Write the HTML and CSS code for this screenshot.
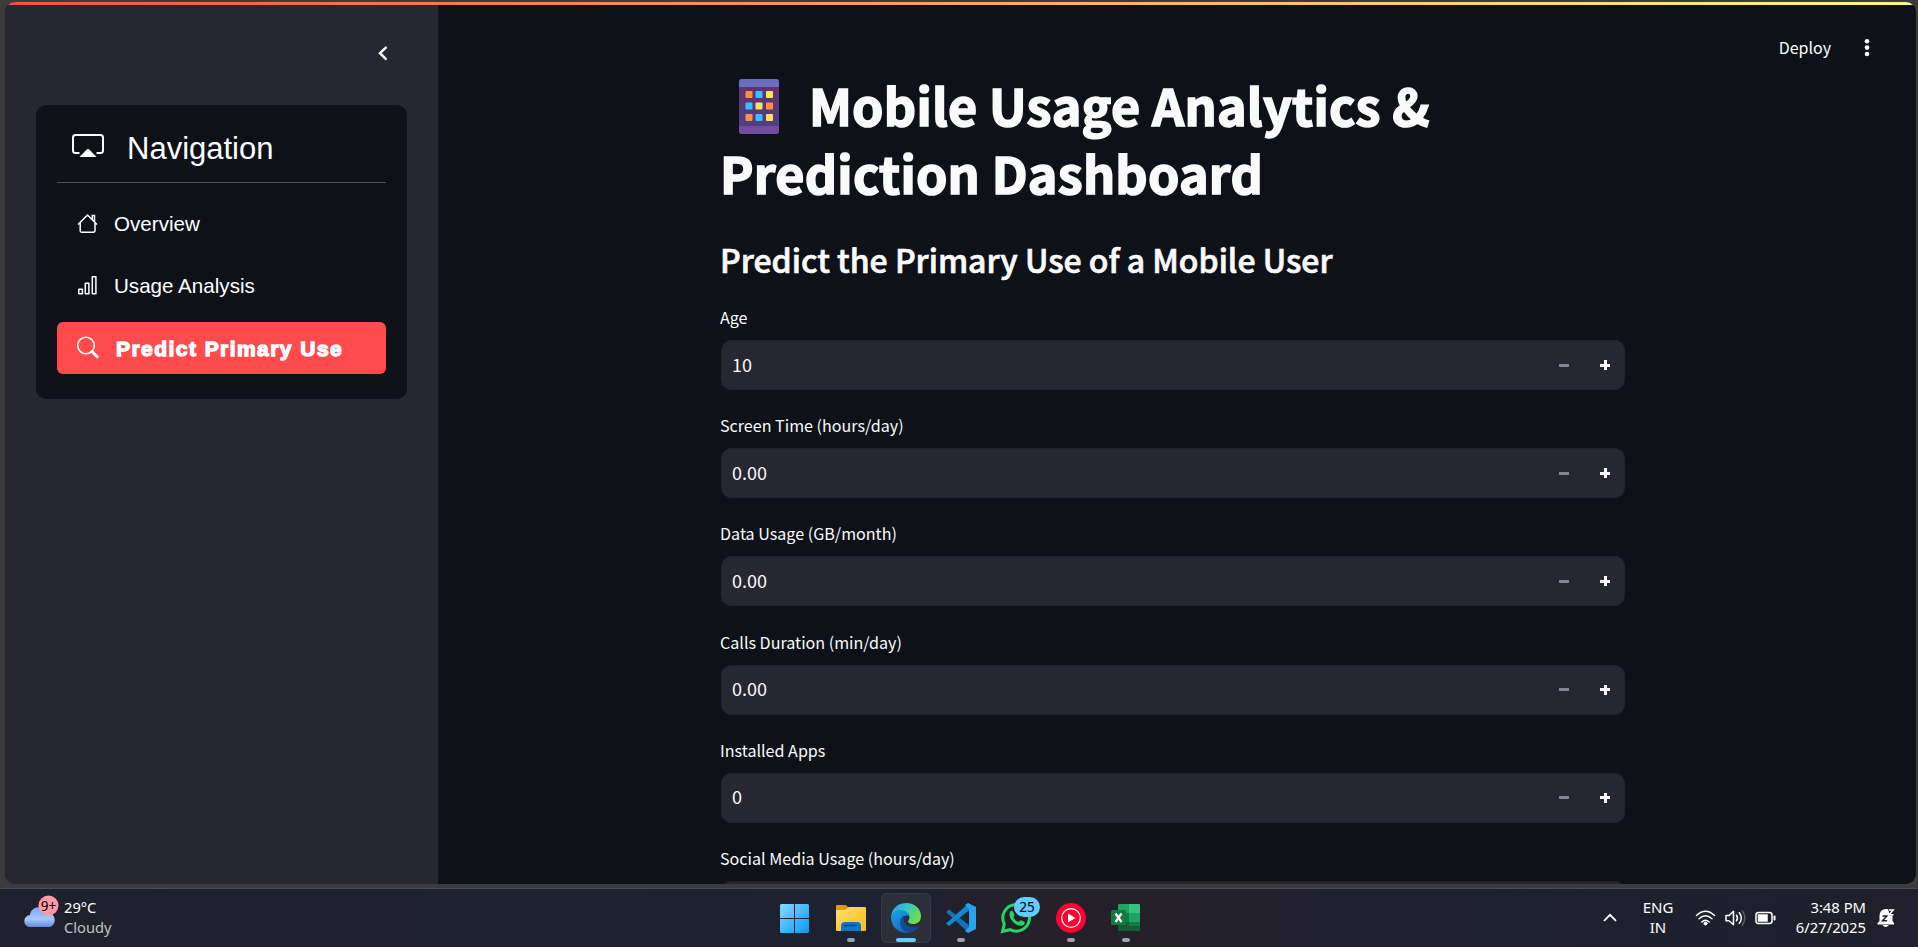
FILE: index.html
```html
<!DOCTYPE html>
<html lang="en">
<head>
<meta charset="utf-8">
<title>Mobile Usage Analytics</title>
<link rel="stylesheet" href="styles.css">
</head>
<body>
<div class="browser">
  <div class="page">
    <div class="rainbow"></div>
    <div class="columns">
      <aside class="sidebar">
        <div class="collapse"><svg width="12" height="17" viewBox="0 0 12 17"><path d="M9.500 1.800 3 8.200l6.500 6.400" fill="none" stroke="#fafafa" stroke-width="2.500"/></svg></div>
        <nav class="menu">
          <div class="menu-head">
            <svg width="32" height="24" viewBox="0 0 32 24"><path d="M7.500 19H3.500Q1 19 1 16.500v-13Q1 1 3.500 1h25Q31 1 31 3.500v13q0 2.500-2.500 2.500h-4" fill="none" stroke="#fff" stroke-width="2"/><path d="M7.500 23 15 15.200q1-1 2 0L24.500 23z" fill="#fff"/></svg>
            <span>Navigation</span>
          </div>
          <div class="item">
            <svg width="22" height="22" viewBox="0 0 22 22"><path d="M1 11.500 10.500 2l9.500 9.500M3.200 9.800v8q0 1.400 1.400 1.400h12q1.400 0 1.400-1.400v-8M15.300 6.500v-4h2.200v6.500" fill="none" stroke="#fff" stroke-width="1.500"/></svg>
            <span>Overview</span>
          </div>
          <div class="item">
            <svg width="22" height="22" viewBox="0 0 22 22"><path d="M1.800 14.200h3.600v4.500H1.800zM8.300 8.200h3.600v10.500H8.300zM15.300 1.700h3.600v17h-3.600z" fill="none" stroke="#fff" stroke-width="1.500" stroke-linejoin="round"/></svg>
            <span>Usage Analysis</span>
          </div>
          <div class="item active">
            <svg width="24" height="24" viewBox="0 0 24 24"><circle cx="10" cy="9.500" r="8.300" fill="none" stroke="#fff" stroke-width="1.500"/><path d="m16 15.500 5.200 5.300" stroke="#fff" stroke-width="3" stroke-linecap="round"/></svg>
            <span>Predict Primary Use</span>
          </div>
        </nav>
      </aside>
      <main class="main">
        <div class="content">
          <h1><svg class="phone" width="40" height="55" viewBox="0 0 40 55">
            <defs><linearGradient id="ph" x2="0" y2="1"><stop stop-color="#632f69"/><stop offset="1" stop-color="#4c4289"/></linearGradient></defs>
            <rect width="40" height="55" rx="3" fill="url(#ph)"/><path d="M0 8V3q0-3 3-3h34q3 0 3 3v5z" fill="#6b6dbd"/><path d="M0 47v5q0 3 3 3h34q3 0 3-3v-5z" fill="#734b9c"/>
            <g fill="#ff9041"><rect x="6.500" y="12" width="7" height="7" rx="1"/><rect x="27" y="23.500" width="7" height="7" rx="1"/><rect x="6.500" y="35" width="7" height="7" rx="1"/></g>
            <g fill="#38bfff"><rect x="16.500" y="12" width="7" height="7" rx="1"/><rect x="6.500" y="23.500" width="7" height="7" rx="1"/><rect x="16.500" y="35" width="7" height="7" rx="1"/></g>
            <g fill="#ffe451"><rect x="27" y="12" width="7" height="7" rx="1"/><rect x="16.500" y="23.500" width="7" height="7" rx="1"/><rect x="27" y="35" width="7" height="7" rx="1"/></g>
          </svg><span>Mobile Usage Analytics &amp;</span><br><span>Prediction Dashboard</span></h1>
          <h2>Predict the Primary Use of a Mobile User</h2>
          <div class="field"><label>Age</label><div class="input"><span>10</span><i class="minus"></i><i class="plus"></i></div></div>
          <div class="field"><label>Screen Time (hours/day)</label><div class="input"><span>0.00</span><i class="minus"></i><i class="plus"></i></div></div>
          <div class="field"><label>Data Usage (GB/month)</label><div class="input"><span>0.00</span><i class="minus"></i><i class="plus"></i></div></div>
          <div class="field"><label>Calls Duration (min/day)</label><div class="input"><span>0.00</span><i class="minus"></i><i class="plus"></i></div></div>
          <div class="field"><label>Installed Apps</label><div class="input"><span>0</span><i class="minus"></i><i class="plus"></i></div></div>
          <div class="field"><label>Social Media Usage (hours/day)</label><div class="input"></div></div>
        </div>
        <div class="toolbar"><span>Deploy</span><svg width="6" height="20" viewBox="0 0 6 20" fill="#fafafa"><circle cx="3" cy="4.200" r="2.300"/><circle cx="3" cy="10.600" r="2.300"/><circle cx="3" cy="17" r="2.300"/></svg></div>
      </main>
    </div>
  </div>
</div>
<footer class="taskbar">
  <div class="weather">
    <svg width="36" height="36" viewBox="0 0 36 36">
      <defs><linearGradient id="cl" x2="0" y2="1"><stop stop-color="#7ea8ee"/><stop offset=".6" stop-color="#a9c8fb"/><stop offset="1" stop-color="#5b8ae0"/></linearGradient></defs>
      <path d="M6.500 32a6 6 0 0 1-.5-12c1-10 15-10 17.500-2 9-1 10 14 1 14z" fill="url(#cl)"/><circle cx="24.500" cy="10.500" r="10" fill="#ff99a4"/><text x="24.500" y="15.500" text-anchor="middle" class="badge-text">9+</text></svg>
    <div class="weather-text"><span>29°C</span><span class="dim">Cloudy</span></div>
  </div>
  <div class="apps">
    <svg width="55" height="58" viewBox="0 0 55 58"><defs><linearGradient id="w" gradientUnits="userSpaceOnUse" x1="12" y1="15" x2="41" y2="44"><stop stop-color="#86dcff"/><stop offset="1" stop-color="#0a95f8"/></linearGradient></defs><path d="M13 15h13v14H12V16zM27 15h13l1 1v13H27zM12 30h14v14H13l-1-1zM27 30h14v13l-1 1H27z" fill="url(#w)"/></svg>
    <svg width="55" height="58" viewBox="0 0 55 58"><defs><linearGradient id="f" x2="1" y2="1"><stop stop-color="#ffde72"/><stop offset="1" stop-color="#fdbb12"/></linearGradient></defs><path d="M13 23v-6q0-1 1-1h8q1 0 2 1l2 2h16v6z" fill="#dc9b05"/><path d="M13 21h9l4-3h16q1 0 1 1v22q0 1-1 1H14q-1 0-1-1z" fill="url(#f)"/><path d="M18 42v-5q0-4 4-4h12q4 0 4 4v5z" fill="#0f75cb"/><path d="M21 36.500h13" stroke="#07457e" stroke-width="1.500"/><rect x="24" y="49" width="8" height="4" rx="2" fill="#a0a0a5"/></svg>
    <svg width="55" height="58" viewBox="0 0 55 58"><defs><linearGradient id="e1" x1="0" x2="1" y2=".5"><stop stop-color="#219be0"/><stop offset=".5" stop-color="#37c6c5"/><stop offset="1" stop-color="#68df4d"/></linearGradient><linearGradient id="e2" x2=".7" y2="1"><stop stop-color="#1da4e9"/><stop offset="1" stop-color="#0c66bd"/></linearGradient></defs>
      <rect x="3.500" y="4.500" width="49" height="49" rx="5" fill="#2e2e38" stroke="#3a3a44"/>
      <path d="M13 28C14 19 20 14 28 14c9 0 15 6 15 13 0 6-4 8-8 8-3 0-5-1-5-2.500 0-1 1.500-2 1.500-4C31.500 25 27 22 22 22c-5 0-8 3-9 6z" fill="url(#e1)"/><path d="M13 28c1-5 5-7 9-7 5 0 9 3 9.500 6-6-2-8 2-8 5 0 6 6 11 12 9.500C27 47 13 42 13 28z" fill="url(#e2)"/><path d="M26.500 26.500c-7 3-6 14 4.500 17.200C36 43 40 40 42 36.500c-8 5-16-.5-16-6 0-2 .5-3 .5-4z" fill="#104b94"/><rect x="18" y="49" width="20" height="4" rx="2" fill="#60cdff"/></svg>
    <svg width="55" height="58" viewBox="0 0 55 58"><path d="m13 23 3-2.500L36 36v8z" fill="#1073b5"/><path d="m13 34.500 3 2.500 20-15.500V14z" fill="#1588cc"/><path d="m35 14 8 4v22l-8 4-3-2 4-4V20l-4-4z" fill="#2aa3ee"/><rect x="24" y="49" width="8" height="4" rx="2" fill="#a0a0a5"/></svg>
    <svg width="55" height="58" viewBox="0 0 55 58"><path d="m14.500 42.500 1.800-7.500A13.300 13.300 0 1 1 22 40.700z" fill="none" stroke="#27d366" stroke-width="3"/><path d="M22 23c2-2.500 3-1 4.500 3 .2 1-1.500 1.800-1 2.600 1 2 2.700 3.500 5 4.400.8.200 1.500-2 2.500-1.700 5 2 4 2.700 3 4.200-2 2-5 1.500-8-.2-4-2.500-8-8-6-12.300z" fill="#27d366"/><rect x="26" y="8" width="26" height="20" rx="10" fill="#60cdff"/><text x="39" y="23" text-anchor="middle" class="badge-text">25</text></svg>
    <svg width="55" height="58" viewBox="0 0 55 58"><circle cx="28" cy="29" r="15" fill="#ff0031"/><circle cx="28" cy="29" r="9.300" fill="none" stroke="#fff" stroke-width="1.200"/><path d="M25 24.500 32.500 29 25 33.500z" fill="#fff"/><rect x="24" y="49" width="8" height="4" rx="2" fill="#a0a0a5"/></svg>
    <svg width="55" height="58" viewBox="0 0 55 58"><path d="M21 15h11v9H20v-8z" fill="#21a366"/><path d="M31 15h10q1 0 1 1v8H31z" fill="#33c481"/><path d="M20 24h11v9H20z" fill="#107c41"/><path d="M31 24h11v9H31z" fill="#21a366"/><path d="M20 33h22v9H20z" fill="#185c37"/><path d="M31 33h11v4H31z" fill="#107c41"/><rect x="13" y="21" width="15" height="15" rx="1.500" fill="#107c41"/><path d="m17.500 24.500 6 8.500M23.500 24.500l-6 8.500" stroke="#fff" stroke-width="2.200"/><rect x="24" y="49" width="8" height="4" rx="2" fill="#a0a0a5"/></svg>
  </div>
  <div class="tray">
    <svg class="chev" width="14" height="9" viewBox="0 0 14 9"><path d="m1 7.800 6-6 6 6" fill="none" stroke="#fff" stroke-width="1.900"/></svg>
    <div class="lang"><span>ENG</span><span>IN</span></div>
    <svg class="status" width="82" height="20" viewBox="0 0 82 20" fill="none" stroke="#fff" stroke-width="1.500" stroke-linecap="round"><path d="M1.500 7.500q9-8.500 18 0M4 10.800q6.500-6 13 0M6.800 14q3.700-3.500 7.400 0"/><circle cx="10.500" cy="15.500" r="1.500" fill="#fff" stroke-width="1"/><path d="M31 7.500h3l4.500-4.300v13.600L34 12.800h-3z" stroke-linejoin="round"/><path d="M41.500 7.200q2 2.800 0 5.600M44.300 4.700q4 5.300 0 10.600"/><path d="M47.200 2.800q5.300 7.200 0 14.400" stroke="#5c5d68"/><rect x="61" y="4.500" width="16" height="11" rx="2.500"/><path d="M63.500 7H72v6h-8.500z" fill="#fff"/><path d="M79.500 8.500v3" stroke-width="2"/></svg>
    <div class="clock"><span>3:48 PM</span><span>6/27/2025</span></div>
    <svg class="bell" width="18" height="20" viewBox="0 0 18 20"><path d="M2.500 13V8q0-7 7-7 6 0 6 7v5l1.500 2v1.500H.5V15zM5.500 17h6.500q-3.200 4-6.500 0z" fill="#fff"/><path d="M11 0h7v7.500h-5.500z" fill="#201f2b"/><path d="M5.500 8h4.300l-4.300 4.800h4.600" fill="none" stroke="#201f2b" stroke-width="1.500"/><path d="M12 2h4.200L12 6.800h4.500" fill="none" stroke="#fff" stroke-width="1.500"/></svg>
  </div>
</footer>
</body>
</html>
```
FILE: styles.css
```css
* { box-sizing: border-box; }
body {
  margin: 0;
  width: 1918px;
  height: 947px;
  overflow: hidden;
  background: #1f202c;
  color: #fafafa;
  font-family: "Noto Sans CJK SC", "Noto Sans", sans-serif;
}
svg { display: block; flex: none; }
.browser { height: 889px; padding: 2px 2px 5px 5px; background: #3b3b3b; border-bottom: 1px solid #4a4b52; }
.page { height: 882px; border-radius: 10px; overflow: hidden; background: #0e1117; }
.rainbow { height: 3px; background: linear-gradient(90deg, #ff4b4b, #fffd80); }
.columns { display: flex; height: 879px; }

.sidebar { width: 433px; flex: none; padding: 0 31px; background: #262730; }
.collapse { display: flex; justify-content: flex-end; height: 100px; padding: 40px 18px 0 0; }
.menu { height: 294px; padding: 20px 21px 0; border-radius: 10px; background: #0e1117; font-family: "Liberation Sans", Arial, sans-serif; color: #fff; }
.menu-head { display: flex; height: 58px; padding: 9px 0 0 15px; gap: 23px; border-bottom: 1px solid #4f5252; font-size: 31px; line-height: 30px; }
.item { display: flex; align-items: center; height: 52px; margin-top: 10px; padding-left: 20px; gap: 15px; border-radius: 6px; font-size: 20.600px; white-space: nowrap; }
.menu-head + .item { margin-top: 15px; }
.active { background: #ff4b4b; padding-left: 19px; gap: 16px; font-weight: 700; font-size: 21px; letter-spacing: 1.450px; -webkit-text-stroke: 1.300px #fff; }
.active span { padding-top: 2px; }

.main { position: relative; flex: 1; overflow: hidden; padding-left: 282px; }
.content { width: 905px; padding-top: 65px; }
h1, h2 { margin: 0; white-space: nowrap; }
h1 { height: 136px; font-size: 50.300px; line-height: 68px; font-weight: 700; letter-spacing: .22px; -webkit-text-stroke: 1.600px #fafafa; }
.phone { display: inline-block; vertical-align: -8px; margin: 0 30px 0 19px; }
h2 { height: 94px; padding-top: 26px; font-size: 32px; line-height: 54px; font-weight: 500; -webkit-text-stroke: .7px #fafafa; }
.field { height: 108.200px; }
label { display: block; height: 40px; font-size: 16.100px; line-height: 35px; white-space: nowrap; }
.input { display: flex; align-items: center; height: 50px; margin-left: 1px; padding: 0 14px 0 10px; border: 1px solid #21222b; border-radius: 10px; background: #262730; font-size: 18px; line-height: 24px; }
.input span { flex: 1; padding-bottom: 3px; }
.minus { width: 10px; height: 3px; margin-right: 31px; background: #808495; }
.plus { width: 10px; height: 10px; background: linear-gradient(#fafafa, #fafafa) center / 10px 3px no-repeat, linear-gradient(#fafafa, #fafafa) center / 3px 10px no-repeat; }
.toolbar { position: absolute; top: 29px; right: 46px; display: flex; align-items: center; gap: 33px; font-size: 16px; line-height: 26px; }

.taskbar { display: flex; height: 58px; background: linear-gradient(90deg, #1f202c, #1d2130 45%, #23202a 52%, #23202a 62%, #1d2030 78%, #201f2b); font-family: "Noto Sans", sans-serif; color: #fff; }
.weather { display: flex; width: 768px; padding: 6px 0 0 24px; gap: 4px; }
.badge-text { font: 13.500px "Noto Sans", sans-serif; fill: #000; }
.weather-text { display: flex; flex-direction: column; padding-top: 2px; font-size: 14.700px; line-height: 20px; }
.dim { color: #c0c1c6; }
.apps { display: flex; width: 385px; }
.tray { display: flex; flex: 1; justify-content: flex-end; padding-right: 23px; font-size: 15px; line-height: 20px; }
.chev { margin: 24px 26px 0 0; }
.lang, .clock { display: flex; flex-direction: column; padding-top: 8px; }
.lang { align-items: center; width: 30px; margin-right: 22px; }
.status { margin: 19px 18px 0 0; }
.clock { align-items: flex-end; width: 71px; margin-right: 11px; font-size: 14.800px; white-space: nowrap; }
.bell { margin-top: 19px; }
```
